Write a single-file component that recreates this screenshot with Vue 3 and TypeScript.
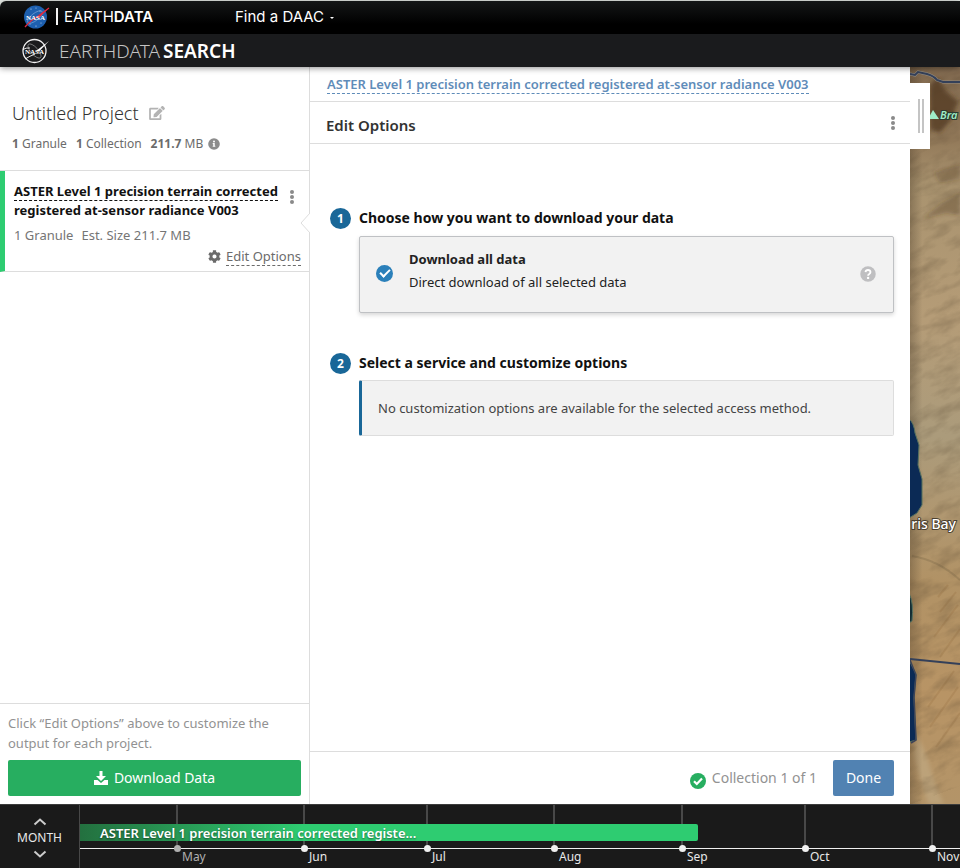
<script setup lang="ts">
interface Stat {
  value: string
  label: string
}

interface Month {
  label: string
  width: number
  past?: boolean
}

const collection = 'ASTER Level 1 precision terrain corrected registered at-sensor radiance V003'

const stats: Stat[] = [
  { value: '1', label: 'Granule' },
  { value: '1', label: 'Collection' },
  { value: '211.7', label: 'MB' },
]

const months: Month[] = [
  { label: 'May', width: 127, past: true },
  { label: 'Jun', width: 123 },
  { label: 'Jul', width: 127 },
  { label: 'Aug', width: 128 },
  { label: 'Sep', width: 123 },
  { label: 'Oct', width: 127 },
  { label: 'Nov', width: 123 },
]

const coverage = { label: 'ASTER Level 1 precision terrain corrected registe...', width: 618 }
</script>

<template>
  <div class="page">
    <header>
      <div class="tophat">
        <a class="brand" href="#">
          <svg class="meatball" viewBox="0 0 28 26" role="img" aria-label="NASA">
            <circle cx="13.500" cy="13" r="11.5" fill="#1d5fae" />
            <g fill="#cfe0f5">
              <circle cx="9" cy="5" r=".6" /><circle cx="14" cy="4" r=".5" /><circle cx="18" cy="7" r=".5" />
              <circle cx="8" cy="20" r=".5" /><circle cx="14" cy="22" r=".6" /><circle cx="19" cy="19" r=".5" />
            </g>
            <ellipse cx="13" cy="13" rx="9" ry="3.6" transform="rotate(-38 13 13)" fill="none" stroke="#9bbce4" stroke-width=".5" />
            <path d="M3 23 Q9 16 15 13 L27 4" fill="none" stroke="#e0293f" stroke-width="1.300" />
            <path d="M14 14 L27 4 L17 14 Z" fill="#e0293f" />
            <text x="13.500" y="16" class="nasa" fill="#fff">NASA</text>
          </svg>
          <span class="brand-bar"></span>
          <span class="brand-name">EARTH<b>DATA</b></span>
        </a>
        <button class="daac" type="button">Find a DAAC <i class="caret"></i></button>
      </div>
      <div class="appbar">
        <a class="app" href="#">
          <svg class="meatball" viewBox="0 0 28 26" role="img" aria-label="NASA">
            <circle cx="12.500" cy="13" r="11.500" fill="none" stroke="#f2f2f2" stroke-width="1.300" />
            <ellipse cx="12.500" cy="13" rx="9" ry="3.600" transform="rotate(48 12.500 13)" fill="none" stroke="#999" stroke-width=".7" />
            <path d="M14 13 L27 3 L17 13.500 Z" fill="#fff" />
            <path d="M1 11.500 Q4 9.500 8 10M3 21 Q8 18 13 16" fill="none" stroke="#fff" stroke-width=".9" />
            <text x="12.500" y="16" class="nasa" fill="#fff">NASA</text>
          </svg>
          <span class="app-name">EARTHDATA<b>SEARCH</b></span>
        </a>
      </div>
    </header>

    <main>
      <aside class="project">
        <div class="project-head">
          <h1>
            Untitled Project
            <button class="icon-btn" type="button" aria-label="Rename project">
              <svg width="16" height="14" viewBox="0 0 576 512" fill="#b3b3b3"><path d="M402.600 83.200l90.200 90.200c3.800 3.800 3.800 10 0 13.800L274.400 405.600l-92.800 10.300c-12.400 1.400-22.900-9.100-21.500-21.500l10.300-92.800L388.800 83.200c3.800-3.800 10-3.800 13.800 0zm162-22.900l-48.800-48.800c-15.200-15.200-39.900-15.200-55.200 0l-35.400 35.400c-3.800 3.800-3.800 10 0 13.800l90.200 90.200c3.800 3.800 10 3.800 13.800 0l35.400-35.400c15.200-15.300 15.200-40 0-55.200zM384 346.200V448H64V128h229.800c3.200 0 6.200-1.300 8.500-3.500l40-40c7.600-7.600 2.200-20.500-8.500-20.500H48C21.500 64 0 85.500 0 112v352c0 26.500 21.500 48 48 48h352c26.500 0 48-21.500 48-48V306.200c0-10.700-12.900-16-20.500-8.500l-40 40c-2.200 2.300-3.500 5.300-3.500 8.500z" /></svg>
            </button>
          </h1>
          <p class="stats">
            <span v-for="s in stats" :key="s.label"><b>{{ s.value }}</b> {{ s.label }}</span>
            <svg class="info" width="12" height="12" viewBox="0 0 512 512"><circle cx="256" cy="256" r="248" fill="#8c8c8c" /><path fill="#fff" d="M256 110a42 42 0 1 1 0 84 42 42 0 0 1 0-84zm56 254c0 7-5 12-12 12h-88c-7 0-12-5-12-12v-24c0-7 5-12 12-12h12v-64h-12c-7 0-12-5-12-12v-24c0-7 5-12 12-12h64c7 0 12 5 12 12v100h12c7 0 12 5 12 12z" /></svg>
          </p>
        </div>

        <section class="item">
          <div class="item-top">
            <a class="item-name" href="#"><span>ASTER Level 1 precision terrain corrected</span><br />registered at-sensor radiance V003</a>
            <button class="icon-btn" type="button" aria-label="Collection actions">
              <svg width="6" height="14" viewBox="0 0 6 14" fill="#8a8a8a"><circle cx="3" cy="2" r="2" /><circle cx="3" cy="7" r="2" /><circle cx="3" cy="12" r="2" /></svg>
            </button>
          </div>
          <p class="item-meta"><span>1 Granule</span><span>Est. Size 211.7 MB</span></p>
          <a class="edit" href="#">
            <svg width="13" height="13" viewBox="0 0 512 512" fill="#6b6b6b"><path d="M487.400 315.700l-42.600-24.600c4.300-23.200 4.300-47 0-70.200l42.600-24.600c4.900-2.800 7.100-8.600 5.500-14-11.100-35.600-30-67.800-54.700-94.600-3.800-4.100-10-5.100-14.800-2.300L380.800 110c-17.900-15.400-38.500-27.300-60.800-35.100V25.800c0-5.600-3.900-10.500-9.400-11.700-36.700-8.200-74.300-7.800-109.200 0-5.500 1.200-9.400 6.100-9.400 11.700V75c-22.200 7.900-42.800 19.800-60.800 35.100L88.700 85.500c-4.900-2.800-11-1.900-14.800 2.300-24.700 26.700-43.600 58.900-54.700 94.600-1.700 5.400.6 11.200 5.500 14L67.300 221c-4.300 23.200-4.300 47 0 70.200l-42.600 24.600c-4.900 2.800-7.100 8.600-5.500 14 11.100 35.600 30 67.800 54.700 94.600 3.800 4.100 10 5.100 14.800 2.300l42.600-24.600c17.900 15.400 38.500 27.300 60.800 35.100v49.200c0 5.600 3.900 10.500 9.400 11.700 36.700 8.200 74.300 7.800 109.200 0 5.500-1.200 9.400-6.100 9.400-11.700v-49.200c22.200-7.900 42.800-19.800 60.800-35.100l42.600 24.600c4.900 2.800 11 1.900 14.800-2.300 24.700-26.700 43.600-58.900 54.700-94.600 1.500-5.500-.7-11.300-5.600-14.100zM256 336c-44.100 0-80-35.900-80-80s35.900-80 80-80 80 35.900 80 80-35.900 80-80 80z" /></svg>
            <span>Edit Options</span>
          </a>
          <svg class="pointer" width="10" height="20" viewBox="0 0 10 20"><path d="M10 0L1 10l9 10" fill="#fff" stroke="#ddd" /></svg>
        </section>

        <div class="project-foot">
          <p>Click “Edit Options” above to customize the output for each project.</p>
          <button class="download" type="button">
            <svg width="14" height="14" viewBox="0 0 14 14" fill="#fff"><path d="M5.500 0h3v5H12L7 10 2 5h3.500z" /><path d="M0 9h3.500L7 12l3.500-3H14v5H0z" /></svg>
            Download Data
          </button>
        </div>
      </aside>

      <section class="panel">
        <div class="crumb"><a href="#">{{ collection }}</a></div>
        <div class="panel-head">
          <h2>Edit Options</h2>
          <button class="icon-btn" type="button" aria-label="More actions">
            <svg width="6" height="14" viewBox="0 0 6 14" fill="#8a8a8a"><circle cx="3" cy="2" r="2" /><circle cx="3" cy="7" r="2" /><circle cx="3" cy="12" r="2" /></svg>
          </button>
        </div>
        <div class="panel-body">
          <section class="step">
            <h3><span class="num">1</span>Choose how you want to download your data</h3>
            <label class="method" for="method-download">
              <input id="method-download" type="radio" name="method" checked />
              <span class="method-text"><b>Download all data</b><span>Direct download of all selected data</span></span>
              <svg width="16" height="16" viewBox="0 0 16 16"><circle cx="8" cy="8" r="7.750" fill="#bfbfc1" /><path d="M5.500 6.200Q5.700 4 8 4t2.500 2.100Q10.500 7.300 9.300 8 8.100 8.600 8.100 9.700" fill="none" stroke="#fff" stroke-width="1.800" /><circle cx="8.100" cy="11.900" r="1.200" fill="#fff" /></svg>
            </label>
          </section>
          <section class="step">
            <h3><span class="num">2</span>Select a service and customize options</h3>
            <p class="notice">No customization options are available for the selected access method.</p>
          </section>
        </div>
        <div class="panel-foot">
          <span class="progress">
            <svg width="16" height="16" viewBox="0 0 16 16"><circle cx="8" cy="8" r="8" fill="#27ae60" /><path d="M4 8.200l2.800 2.800L12 5.600" fill="none" stroke="#fff" stroke-width="2.200" /></svg>
            Collection 1 of 1
          </span>
          <button class="done" type="button">Done</button>
        </div>
      </section>

      <div class="map">
        <svg class="terrain" viewBox="0 0 50 737" preserveAspectRatio="xMinYMin slice" aria-hidden="true">
          <defs>
            <linearGradient id="sand" x1="0" y1="0" x2="0" y2="1">
              <stop offset="0" stop-color="#826a50" />
              <stop offset=".1" stop-color="#937a5a" />
              <stop offset=".16" stop-color="#a9936f" />
              <stop offset=".34" stop-color="#b59c77" />
              <stop offset=".5" stop-color="#ab9b7b" />
              <stop offset=".61" stop-color="#b09770" />
              <stop offset=".7" stop-color="#b19265" />
              <stop offset=".85" stop-color="#b89465" />
              <stop offset="1" stop-color="#b39468" />
            </linearGradient>
            <linearGradient id="edge">
              <stop offset="0" stop-color="#3a2d1d" stop-opacity=".3" />
              <stop offset=".25" stop-color="#3a2d1d" stop-opacity="0" />
              <stop offset="1" stop-color="#3a2d1d" stop-opacity="0" />
            </linearGradient>
            <filter id="grain" x="0" y="0" width="100%" height="100%" color-interpolation-filters="sRGB">
              <feTurbulence type="fractalNoise" baseFrequency=".04 .08" numOctaves="4" seed="8" />
              <feColorMatrix values="0 0 0 0 .3  0 0 0 0 .24  0 0 0 0 .16  1.800 0 0 0 -.75" />
            </filter>
            <filter id="soft"><feGaussianBlur stdDeviation="2" /></filter>
          </defs>
          <rect width="50" height="737" fill="url(#sand)" />
          <g filter="url(#soft)" fill="#4b3420">
            <path d="M20 18l8-8 8 14 12 10-6 18-12 14-10-4z" opacity=".7" />
            <path d="M12 152l20-16 18-10v22l-14-2z" opacity=".35" />
            <path d="M24 106l26-8v14l-20 4z" opacity=".3" />
          </g>
          <path d="M6 668q8 10 14 32t14 37H18q-10-30-14-50z" fill="#c4b08c" opacity=".5" filter="url(#soft)" />
          <path d="M2 489q26 4 48 24" fill="none" stroke="#69573c" stroke-width="2" opacity=".25" />
          <g fill="none" stroke="#8a6338" stroke-opacity=".2" stroke-width="2">
            <path d="M28 530l10-12M30 545l16-20M24 570l24-32M30 590l20-28M18 640l26-36M20 660l28-40M26 680l24-34" />
          </g>
          <rect width="50" height="737" filter="url(#grain)" transform="skewY(-20)" opacity=".3" />
          <rect width="50" height="737" fill="url(#edge)" />
          <g stroke="#55705f" stroke-width="1" fill="#0b2a55">
            <path d="M-1 352q5 4 6 14l4 12-1 20 4 14v26l-5 8-8 5z" />
            <path d="M-1 526q5 10 3 28l-3 2z" fill="#142e34" />
            <path d="M-1 593l7 14-2 24 2 42-7 2z" />
          </g>
          <path d="M0 593l6 15-2 22 2 43-5 3" fill="none" stroke="#3c4358" stroke-width="1.500" />
          <g fill="none">
            <path d="M0 7l5 1 3-3 9 2q7 2 10 6l6 2h17" stroke="#a3a8a8" stroke-width="3" opacity=".6" />
            <path d="M0 7l5 1 3-3 9 2q7 2 10 6l6 2h17" stroke="#344059" stroke-width="2" />
            <path d="M0 592l50 5" stroke="#344059" stroke-width="2" />
          </g>
          <path d="M18 52l5-9 6 9z" fill="#a0ecc6" />
          <text x="30" y="52" class="peak">Bra</text>
          <text x="46" y="462" class="town">ris Bay</text>
        </svg>
        <button class="handle" type="button" aria-label="Resize panel"><i></i><i></i></button>
      </div>
    </main>

    <footer class="timeline">
      <div class="zoom">
        <button type="button" aria-label="Coarser interval"><svg width="14" height="8" viewBox="0 0 14 8"><path d="M1.500 6.500L7 1.500l5.500 5" /></svg></button>
        <span>MONTH</span>
        <button type="button" aria-label="Finer interval"><svg width="14" height="8" viewBox="0 0 14 8"><path d="M1.500 1.500L7 6.500l5.500-5" /></svg></button>
      </div>
      <div class="track">
        <div class="months">
          <div v-for="m in months" :key="m.label" class="month" :class="{ past: m.past }" :style="{ flexBasis: m.width + 'px' }">
            <i></i><span>{{ m.label }}</span>
          </div>
        </div>
        <div class="coverage" :style="{ width: coverage.width + 'px' }">{{ coverage.label }}</div>
      </div>
    </footer>
  </div>
</template>

<style>
body {
  background: #e9eeea;
}
</style>

<style scoped>
* {
  box-sizing: border-box;
}
.page {
  display: flex;
  flex-direction: column;
  min-height: 100vh;
  padding-top: 1px;
  font: 13px/20px "Noto Sans", "Open Sans", sans-serif;
  color: #222;
}
h1, h2, h3, p {
  margin: 0;
}
button {
  font: inherit;
  border: 0;
  padding: 0;
  background: none;
  cursor: pointer;
}
a {
  color: inherit;
  text-decoration: none;
}
svg {
  display: block;
  flex: none;
}
header {
  position: relative;
  z-index: 2;
  color: #fff;
  border-radius: 6px 0 0 0;
  overflow: hidden;
  box-shadow: 0 1px 6px rgba(0, 0, 0, .45);
}
.tophat {
  display: flex;
  align-items: center;
  height: 33px;
  padding: 0 0 2px 22px;
  background: linear-gradient(#141617, #000 70%);
}
.brand, .app {
  display: flex;
  align-items: center;
}
.brand {
  width: 213px;
}
.meatball {
  width: 28px;
  height: 26px;
}
.nasa {
  font: bold 7px "Liberation Serif", serif;
  text-anchor: middle;
}
.brand-bar {
  width: 2px;
  height: 17px;
  margin: 0 6px;
  background: #f3f3f3;
}
.brand-name, .daac {
  font-family: Inter, "Liberation Sans", sans-serif;
  font-size: 15px;
  color: #fff;
}
.brand-name {
  white-space: nowrap;
}
.brand-name b {
  font-weight: 600;
}
.daac {
  display: flex;
  align-items: center;
  gap: 6px;
}
.caret {
  width: 0;
  margin-top: 3px;
  border: 2px solid transparent;
  border-top-color: #fff;
  border-bottom: 0;
}
.appbar {
  height: 33px;
  padding: 3px 0 0 22px;
  background: #1a1b1d;
}
.app-name {
  margin-left: 9px;
  font-size: 19px;
  line-height: 28px;
  font-weight: 300;
  color: #c4c4c4;
}
.app-name b {
  margin-left: 3px;
  font-weight: 600;
  color: #fff;
}
main {
  display: flex;
  flex: 1;
  background: #fff;
}
.project {
  display: flex;
  flex-direction: column;
  flex: none;
  width: 310px;
  border-right: 1px solid #ddd;
}
.project-head {
  height: 104px;
  padding: 33px 12px 0;
  border-bottom: 1px solid #ddd;
}
h1 {
  display: flex;
  align-items: center;
  gap: 10px;
  font-size: 18px;
  line-height: 26px;
  font-weight: 300;
  color: #333;
}
.stats {
  display: flex;
  align-items: center;
  gap: 9px;
  margin-top: 8px;
  font-size: 12px;
  color: #6b6b6b;
}
.info {
  margin-left: -4px;
}
.item {
  position: relative;
  height: 101px;
  padding: 11px 8px 0 9px;
  border-left: 5px solid #2ecc71;
  border-bottom: 1px solid #ddd;
}
.item-top {
  display: flex;
  align-items: flex-start;
  justify-content: space-between;
  padding-right: 6px;
}
.item-top .icon-btn {
  padding-top: 8px;
}
.item-name {
  font-weight: 700;
  line-height: 19px;
  color: #111;
  white-space: nowrap;
}
.item-name span, .edit span, .crumb a {
  border-bottom: 1px dashed;
}
.item-meta {
  display: flex;
  gap: 8px;
  margin-top: 5px;
  color: #757575;
}
.edit {
  display: flex;
  align-items: center;
  justify-content: flex-end;
  gap: 5px;
  line-height: 18px;
  margin-top: 2px;
  color: #6b6b6b;
}
.pointer {
  position: absolute;
  right: -1px;
  top: 42px;
}
.project-foot {
  margin-top: auto;
  padding: 9px 8px 8px;
  border-top: 1px solid #ddd;
  color: #929292;
}
.download {
  display: flex;
  align-items: center;
  justify-content: center;
  gap: 6px;
  width: 100%;
  height: 36px;
  margin-top: 7px;
  border-radius: 2px;
  background: #27ae60;
  color: #fff;
  font-size: 14px;
}
.panel {
  display: flex;
  flex-direction: column;
  flex: 0 0 600px;
}
.crumb {
  height: 35px;
  padding: 7px 17px;
  border-bottom: 1px solid #ddd;
  font-weight: 600;
  color: #5f8cb9;
}
.panel-head {
  display: flex;
  align-items: center;
  justify-content: space-between;
  height: 42px;
  padding: 0 14px 0 16px;
  border-bottom: 1px solid #ddd;
}
h2 {
  padding-top: 4px;
  font-size: 15px;
  font-weight: 600;
  color: #333;
}
.panel-body {
  flex: 1;
  padding: 63px 16px 20px 20px;
}
.step + .step {
  margin-top: 39px;
}
h3 {
  display: flex;
  align-items: center;
  gap: 8px;
  font-size: 14px;
  line-height: 22px;
  font-weight: 700;
  color: #111;
}
.num {
  width: 21px;
  height: 21px;
  border-radius: 50%;
  background: #196798;
  color: #fff;
  font-size: 12px;
  line-height: 21px;
  text-align: center;
}
.method {
  display: flex;
  align-items: center;
  gap: 16px;
  height: 77px;
  margin: 7px 0 0 29px;
  padding: 0 17px 0 16px;
  border: 1px solid #bfc1c4;
  border-radius: 2px;
  background: #f2f2f2;
  box-shadow: 0 2px 4px rgba(0, 0, 0, .16);
}
.method input {
  appearance: none;
  width: 17px;
  height: 17px;
  margin: 0 0 2px;
  border-radius: 50%;
  background: #2b80ba;
  display: grid;
  place-items: center;
}
.method > svg {
  margin-bottom: 2px;
}
.method input:checked::before {
  content: "";
  width: 8px;
  height: 4px;
  margin-bottom: 3px;
  border: solid #fff;
  border-width: 0 0 2px 2px;
  transform: rotate(-45deg);
}
.method-text {
  display: flex;
  flex-direction: column;
  flex: 1;
  gap: 3px;
  padding-bottom: 8px;
}
.notice {
  margin: 6px 0 0 29px;
  padding: 17px 16px;
  border: 1px solid #ddd;
  border-left: 3px solid #196798;
  border-radius: 2px;
  background: #f2f2f2;
  color: #444;
}
.panel-foot {
  display: flex;
  align-items: center;
  justify-content: flex-end;
  gap: 16px;
  padding: 8px 16px;
  border-top: 1px solid #ddd;
}
.progress {
  display: flex;
  align-items: center;
  gap: 6px;
  font-size: 14px;
  color: #929292;
}
.progress svg {
  margin-top: 5px;
}
.done {
  width: 61px;
  height: 36px;
  border-radius: 2px;
  background: #5182b2;
  color: #fff;
  font-size: 14px;
}
.map {
  position: relative;
  flex: 1;
  min-width: 0;
  overflow: hidden;
  background: #b69d75;
}
.terrain {
  position: absolute;
  inset: 0;
  width: 100%;
  height: 100%;
}
.peak {
  font: italic 600 11px "Noto Sans", sans-serif;
  fill: #a0ecc6;
  stroke: #2a3a30;
  stroke-width: 2px;
  paint-order: stroke;
}
.town {
  font: 500 14px "Noto Sans", sans-serif;
  text-anchor: end;
  fill: #fff;
  stroke: #4a4030;
  stroke-width: 2px;
  paint-order: stroke;
}
.handle {
  position: absolute;
  left: 0;
  top: 16px;
  display: flex;
  align-items: center;
  justify-content: flex-end;
  gap: 2px;
  width: 20px;
  height: 66px;
  padding-right: 6px;
  background: #fff;
}
.handle i {
  width: 2px;
  height: 34px;
  background: #c4c4c4;
}
.timeline {
  display: flex;
  height: 64px;
  border-top: 1px solid #3c3c3c;
  background: #1a1a1a;
  color: #e8e8e8;
  font-size: 12px;
}
.zoom {
  display: flex;
  flex-direction: column;
  align-items: center;
  flex: none;
  gap: 5px;
  width: 80px;
  padding-top: 13px;
  border-right: 1px solid #484848;
  line-height: 14px;
}
.zoom path {
  fill: none;
  stroke: #ccc;
  stroke-width: 2;
}
.track {
  position: relative;
  flex: 1;
  min-width: 0;
  overflow: hidden;
}
.months {
  display: flex;
  height: 100%;
  padding-left: 96px;
  background: linear-gradient(#f0f0f0, #f0f0f0) 0 43px / 100% 1px no-repeat;
}
.month {
  flex: none;
  background: linear-gradient(#484848, #484848) 0 0 / 2px 43px no-repeat;
  padding-top: 40px;
}
.month i {
  display: block;
  width: 7px;
  height: 7px;
  margin-left: -2px;
  border-radius: 50%;
  background: #f0f0f0;
}
.month span {
  display: block;
  margin: -2px 0 0 6px;
  line-height: 14px;
}
.past i {
  background: #b0b0b0;
}
.past span {
  color: #b0b0b0;
}
.coverage {
  position: absolute;
  left: 0;
  top: 19px;
  height: 17px;
  padding-left: 20px;
  border-radius: 0 2px 2px 0;
  background: linear-gradient(90deg, #23703f, #2ecc71 36%);
  color: #fff;
  font-size: 13px;
  line-height: 19px;
  font-weight: 600;
  white-space: nowrap;
  text-shadow: 0 1px 2px rgba(0, 0, 0, .5);
}
</style>
